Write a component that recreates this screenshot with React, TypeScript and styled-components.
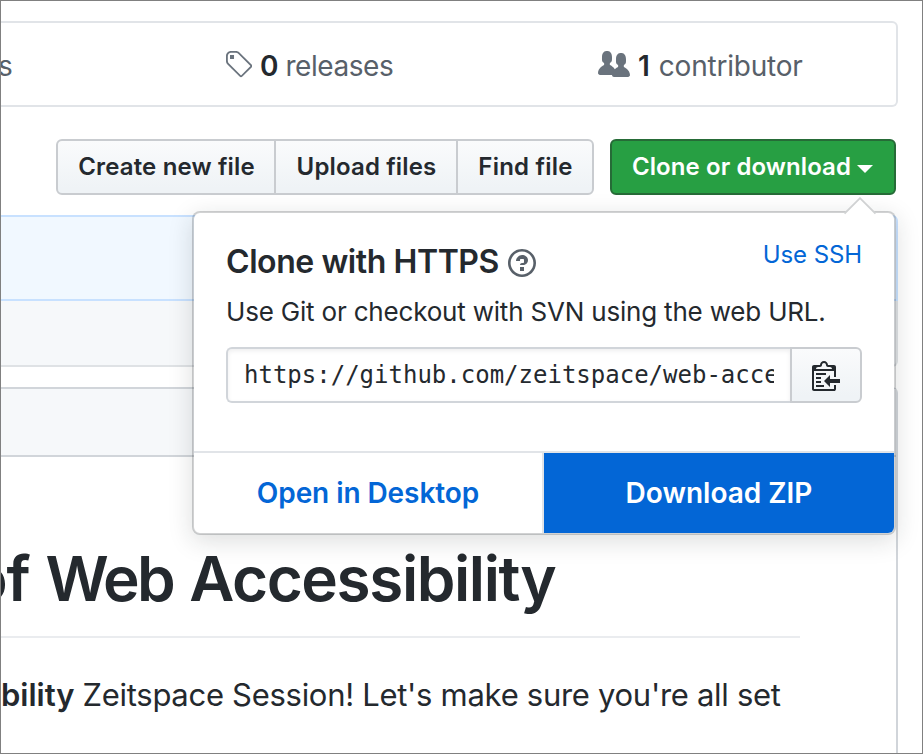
import React from 'react';
import styled, { createGlobalStyle } from 'styled-components';

const GlobalStyle = createGlobalStyle`
  *, *::before, *::after { box-sizing: border-box; }
  body { margin: 0; background: #fff; }
  h1, h2, p { margin: 0; }
`;

const Frame = styled.div`
  width: 923px;
  height: 754px;
  border: 1px solid #808080;
  background: #fff;
  overflow: hidden;
  color: #24292e;
  font-family: Inter, "Liberation Sans", sans-serif;
`;

const Main = styled.main`
  position: relative;
  display: flex;
  flex-direction: column;
  width: 897px;
  height: 752px;
  padding-top: 20px;
`;

/* Keeps runs of text at the width of the site's system font. */
const Text = styled.span<{ $track?: number }>`
  letter-spacing: ${(p) => p.$track ?? 0}px;
  white-space: pre;
`;

const Summary = styled.div`
  display: grid;
  grid-template-columns: 223px 374px 1fr;
  flex: none;
  height: 86px;
  padding-top: 26px;
  border: 2px solid #e1e4e8;
  border-left: 0;
  border-radius: 0 6px 6px 0;
  font-size: 28px;
  line-height: 34px;
  color: #586069;
`;

const Stat = styled.div<{ $gap?: number }>`
  display: flex;
  align-items: flex-start;
  gap: 7px;
  min-width: 0;
  svg { flex: none; fill: #6a737d; }
  span + span { margin-left: ${(p) => p.$gap ?? 0}px; }
`;

const ClippedStat = styled(Stat)`
  margin-left: -3px;
`;

const Count = styled.span`
  font-weight: 600;
  color: #24292e;
  margin-left: 1px;
`;

const Actions = styled.div`
  display: flex;
  flex: none;
  justify-content: flex-end;
  gap: 16px;
  margin: 32px 2px 0 0;
`;

const ButtonGroup = styled.div`
  display: flex;
`;

const Button = styled.button<{ $width: number }>`
  width: ${(p) => p.$width}px;
  height: 56px;
  padding: 0 0 0 1px;
  border: 2px solid #c9ccd0;
  background: linear-gradient(-180deg, #fafbfc 0%, #eff3f6 90%);
  color: #24292e;
  font: 600 24px/52px Inter, "Liberation Sans", sans-serif;
  & + & { margin-left: -2px; }
  &:first-child { border-radius: 6px 0 0 6px; }
  &:last-child { border-radius: 0 6px 6px 0; }
`;

const CloneButton = styled.button`
  display: flex;
  align-items: center;
  gap: 7px;
  width: 286px;
  height: 56px;
  padding: 0 0 0 20px;
  border: 2px solid #266b37;
  border-radius: 6px;
  background: #279f43;
  color: #fff;
  font: 600 24px/52px Inter, "Liberation Sans", sans-serif;
`;

const Caret = styled.span`
  margin: 3px 0 0 -1px;
  border: 8px solid transparent;
  border-top-color: #fff;
  border-bottom: 0;
`;

const CommitBar = styled.div`
  flex: none;
  height: 86px;
  margin-top: 20px;
  border: 2px solid #c8e1ff;
  border-left: 0;
  border-radius: 0 6px 0 0;
  background: #f1f8ff;
`;

const FileRow = styled.div`
  flex: none;
  height: 66px;
  border: 2px solid #dfe2e5;
  border-width: 0 2px 2px 0;
  border-radius: 0 0 6px 0;
  background: #f6f8fa;
`;

const Readme = styled.section`
  flex: 1;
  margin-top: 20px;
  border: 2px solid #d1d5da;
  border-width: 2px 2px 0 0;
  border-radius: 0 6px 0 0;
`;

const ReadmeHeader = styled.div`
  height: 68px;
  border-bottom: 2px solid #d1d5da;
  background: #f6f8fa;
`;

const Article = styled.article`
  width: 799px;
  padding-top: 82px;
`;

const Title = styled.h1`
  display: flex;
  gap: 16px;
  height: 99px;
  margin-bottom: 33px;
  border-bottom: 2px solid #eaecef;
  font-size: 62px;
  font-weight: 600;
  line-height: 80px;
`;

const TitleStart = styled(Text)`
  margin-left: -31px;
`;

const Paragraph = styled.p`
  display: flex;
  gap: 8px;
  font-size: 31px;
  line-height: 48px;
  strong { font-weight: 600; }
`;

const Popover = styled.div`
  position: absolute;
  top: 210px;
  left: 191px;
  display: flex;
  flex-direction: column;
  width: 704px;
  height: 324px;
  border: 2px solid rgba(27, 31, 35, 0.2);
  border-radius: 8px;
  background: #fff;
  background-clip: padding-box;
  box-shadow: 0 6px 24px rgba(27, 31, 35, 0.15);
`;

const Pointer = styled.svg`
  position: absolute;
  top: -16px;
  left: 650px;
`;

const PopoverBody = styled.div`
  flex: 1;
  padding: 27px 32px 0;
`;

const PopoverHeader = styled.div`
  display: flex;
  justify-content: space-between;
  height: 42px;
`;

const PopoverTitle = styled.h2`
  display: flex;
  align-items: flex-start;
  gap: 9px;
  padding-top: 2px;
  font-size: 32px;
  font-weight: 600;
  line-height: 40px;
  svg { margin-top: 5px; fill: #586069; }
`;

const SshLink = styled.a`
  color: #0366d6;
  font-size: 24px;
  line-height: 30px;
`;

const Description = styled.p`
  margin-top: 10px;
  font-size: 26px;
  line-height: 40px;
`;

const UrlRow = styled.div`
  display: flex;
  margin-top: 15px;
`;

const UrlField = styled.div`
  flex: 1;
  min-width: 0;
  height: 56px;
  padding: 0 16px;
  border: 2px solid #d1d5da;
  border-right: 0;
  border-radius: 6px 0 0 6px;
  box-shadow: inset 0 2px 4px rgba(27, 31, 35, 0.075);
`;

const Url = styled.div`
  overflow: hidden;
  white-space: nowrap;
  font: 24px/52px "DejaVu Sans Mono", monospace;
`;

const CopyButton = styled.button`
  display: flex;
  align-items: center;
  justify-content: center;
  width: 72px;
  height: 56px;
  padding: 0;
  border: 2px solid #c9ccd0;
  border-radius: 0 6px 6px 0;
  background: linear-gradient(-180deg, #fafbfc 0%, #eff3f6 90%);
  svg { fill: #24292e; }
`;

const PopoverFooter = styled.div`
  display: grid;
  grid-template-columns: 350px 350px;
  height: 82px;
  border-top: 2px solid #e1e4e8;
`;

const FooterLink = styled.a<{ $primary?: boolean }>`
  border-right: ${(p) => (p.$primary ? '0' : '2px solid #e1e4e8')};
  border-radius: ${(p) => (p.$primary ? '0 0 6px 0' : '0')};
  background: ${(p) => (p.$primary ? '#0366d6' : 'transparent')};
  color: ${(p) => (p.$primary ? '#fff' : '#0366d6')};
  font-size: 28px;
  font-weight: 600;
  line-height: 80px;
  text-align: center;
`;

const Icon = ({ width, d }: { width: number; d: string }) => (
  <svg width={width * 2} height={32} viewBox={`0 0 ${width} 16`} fillRule="evenodd" aria-hidden="true">
    <path d={d} />
  </svg>
);

const TAG =
  'M7.73 1.73C7.26 1.26 6.62 1 5.96 1H3.5C2.13 1 1 2.13 1 3.5v2.47c0 .66.27 1.3.73 1.77l6.06 6.06c.39.39 1.02.39 1.41 0l4.59-4.59a.996.996 0 0 0 0-1.41L7.73 1.73zM2.38 7.09c-.31-.3-.47-.7-.47-1.13V3.5c0-.88.72-1.59 1.59-1.59h2.47c.42 0 .83.16 1.13.47l6.14 6.13-4.73 4.73-6.13-6.15zM3.01 3h2v2H3V3h.01z';
const PEOPLE =
  'M16 12.999c0 .439-.45 1-1 1H7.995c-.539 0-.994-.447-.995-.999H1c-.54 0-1-.561-1-1 0-2.634 3-4 3-4s.229-.409 0-1c-.841-.621-1.058-.59-1-3 .058-2.419 1.367-3 2.5-3s2.442.58 2.5 3c.058 2.41-.159 2.379-1 3-.229.59 0 1 0 1s1.549.711 2.42 2.088C9.196 9.369 10 8.999 10 8.999s.229-.409 0-1c-.841-.62-1.058-.59-1-3 .058-2.419 1.367-3 2.5-3s2.437.581 2.495 3c.059 2.41-.158 2.38-1 3-.229.59 0 1 0 1s3.005 1.366 3.005 4z';
const QUESTION =
  'M6 10h2v2H6v-2zm4-3.5C10 8.64 8 9 8 9H6c0-.55.45-1 1-1h.5c.28 0 .5-.22.5-.5v-1c0-.28-.22-.5-.5-.5h-1c-.28 0-.5.22-.5.5V7H4c0-1.5 1.5-3 3-3s3 1 3 2.5zM7 2.3c3.14 0 5.7 2.56 5.7 5.7s-2.56 5.7-5.7 5.7A5.71 5.71 0 0 1 1.3 8c0-3.14 2.56-5.7 5.7-5.7zM7 1C3.14 1 0 4.14 0 8s3.14 7 7 7 7-3.14 7-7-3.14-7-7-7z';
const CLIPPY =
  'M2 13h4v1H2v-1zm5-6H2v1h5V7zm2 3V8l-3 3 3 3v-2h5v-2H9zM4.5 9H2v1h2.5V9zM2 12h2.5v-1H2v1zm9 1h1v2c-.02.28-.11.52-.3.7-.19.18-.42.28-.7.3H1c-.55 0-1-.45-1-1V4c0-.55.45-1 1-1h3c0-1.11.89-2 2-2 1.11 0 2 .89 2 2h3c.55 0 1 .45 1 1v5h-1V6H1v9h10v-2zM2 5h8c0-.55-.45-1-1-1H8c-.55 0-1-.45-1-1s-.45-1-1-1-1 .45-1 1-.45 1-1 1H3c-.55 0-1 .45-1 1z';

const fileActions = [
  { label: 'Create new file', width: 220, track: 0.16 },
  { label: 'Upload files', width: 184, track: 0.15 },
  { label: 'Find file', width: 138, track: 0.22 },
];

export default function App() {
  return (
    <>
      <GlobalStyle />
      <Frame>
        <Main>
          <Summary>
            <ClippedStat>s</ClippedStat>
            <Stat>
              <Icon width={14} d={TAG} />
              <Count>0</Count>
              <Text $track={-0.45}>releases</Text>
            </Stat>
            <Stat $gap={2}>
              <Icon width={16} d={PEOPLE} />
              <Count>1</Count>
              <Text $track={-0.22}>contributor</Text>
            </Stat>
          </Summary>

          <Actions>
            <ButtonGroup>
              {fileActions.map((a) => (
                <Button key={a.label} $width={a.width}>
                  <Text $track={a.track}>{a.label}</Text>
                </Button>
              ))}
            </ButtonGroup>
            <CloneButton>
              <Text $track={0.08}>Clone or download</Text>
              <Caret />
            </CloneButton>
          </Actions>

          <CommitBar />
          <FileRow />

          <Readme>
            <ReadmeHeader />
            <Article>
              <Title>
                <TitleStart $track={-1.2}>of</TitleStart>
                <Text $track={-2.6}>Web</Text>
                <Text $track={-1.4}>Accessibility</Text>
              </Title>
              <Paragraph>
                <strong>bility</strong>
                <Text $track={-0.29}>Zeitspace Session! Let's make sure you're all set</Text>
              </Paragraph>
            </Article>
          </Readme>

          <Popover>
            <Pointer width="32" height="18" viewBox="0 0 32 18">
              <path d="M0 18V16.5L16 1L32 16.5V18Z" fill="#fff" />
              <path d="M0.5 16.5L16 1.2L31.5 16.5" fill="none" stroke="#d0d2d3" strokeWidth="1.8" />
            </Pointer>
            <PopoverBody>
              <PopoverHeader>
                <PopoverTitle>
                  <Text $track={-0.43}>Clone with HTTPS</Text>
                  <Icon width={14} d={QUESTION} />
                </PopoverTitle>
                <SshLink>
                  <Text $track={-0.1}>Use SSH</Text>
                </SshLink>
              </PopoverHeader>
              <Description>
                <Text $track={-0.19}>Use Git or checkout with SVN using the web URL.</Text>
              </Description>
              <UrlRow>
                <UrlField>
                  <Url>https://github.com/zeitspace/web-accessibility.git</Url>
                </UrlField>
                <CopyButton aria-label="Copy">
                  <Icon width={14} d={CLIPPY} />
                </CopyButton>
              </UrlRow>
            </PopoverBody>
            <PopoverFooter>
              <FooterLink>
                <Text $track={-0.07}>Open in Desktop</Text>
              </FooterLink>
              <FooterLink $primary>
                <Text>Download ZIP</Text>
              </FooterLink>
            </PopoverFooter>
          </Popover>
        </Main>
      </Frame>
    </>
  );
}
